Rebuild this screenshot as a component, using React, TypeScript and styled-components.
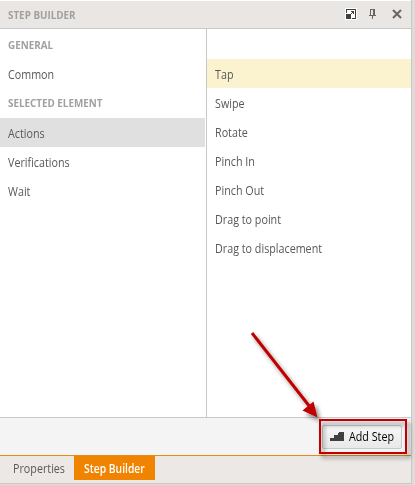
import React from "react";
import styled, { createGlobalStyle } from "styled-components";

const GlobalStyle = createGlobalStyle`
  * { box-sizing: border-box; }
  body {
    margin: 0;
    background: #dddcd8;
    font-family: "Open Sans", "Noto Sans", sans-serif;
    font-size: 12px;
    line-height: 17px;
    color: #58585a;
  }
`;

const Panel = styled.div`
  position: relative;
  display: flex;
  flex-direction: column;
  width: 412px;
  height: 484px;
  border-right: 1px solid #c8c8c8;
  border-bottom: 1px solid #c8c8c8;
  background: #fff;
`;

const Header = styled.header`
  display: flex;
  align-items: center;
  justify-content: space-between;
  height: 28px;
  margin-top: 1px;
  padding: 0 8px;
  background: #e9e6e3;
  border-bottom: 1px solid #c8c8c8;
`;

const Label = styled.span<{ $condense?: number }>`
  display: block;
  transform: scaleX(${(p) => p.$condense ?? 0.895});
  transform-origin: left center;
  white-space: nowrap;
`;

const Caption = styled(Label)`
  font-size: 11px;
  font-weight: 700;
  line-height: 15px;
  color: #a0a0a0;
`;

const HeaderIcons = styled.div`
  display: flex;
  align-items: center;
  padding-bottom: 1px;
`;

const Columns = styled.main`
  display: flex;
  height: 388px;
`;

const Categories = styled.section`
  display: flex;
  flex-direction: column;
  width: 207px;
  padding: 2px 1px 0 0;
  border-right: 1px solid #c8c8c8;
`;

const Steps = styled.section`
  flex: 1;
  padding-top: 30px;
`;

const Row = styled.div<{ $fill?: string }>`
  display: flex;
  align-items: center;
  height: 29px;
  padding: 2px 8px 0;
  background: ${(p) => p.$fill ?? "transparent"};
  font-weight: 500;
`;

const GroupRow = styled.div<{ $height: number }>`
  display: flex;
  align-items: center;
  height: ${(p) => p.$height}px;
  padding: 0 8px 1px;
`;

const Footer = styled.footer`
  display: flex;
  align-items: center;
  justify-content: flex-end;
  height: 38px;
  padding-right: 9px;
  background: #f4f4f4;
  border-top: 1px solid #c8c8c8;
`;

const AddButton = styled.button`
  display: flex;
  align-items: center;
  gap: 5px;
  width: 80px;
  height: 24px;
  padding: 0 0 0 7px;
  border: 1px solid #c9c9c9;
  border-radius: 2px;
  background: linear-gradient(#f6f6f6, #e9e9e9);
  font: inherit;
  font-weight: 500;
  color: #000;
`;

const Tabs = styled.nav`
  display: flex;
  height: 28px;
  border-top: 1px solid #e88b13;
  background: #ece8e5;
`;

const Tab = styled.div<{ $active?: boolean }>`
  display: flex;
  align-items: center;
  width: ${(p) => (p.$active ? 81 : 74)}px;
  height: 24px;
  padding-left: ${(p) => (p.$active ? 10 : 13)}px;
  background: ${(p) => (p.$active ? "#f08400" : "transparent")};
  color: ${(p) => (p.$active ? "#fff" : "#58585a")};
  font-weight: ${(p) => (p.$active ? 600 : 500)};
`;

const Annotation = styled.svg`
  position: absolute;
  left: 240px;
  top: 320px;
  overflow: visible;
  pointer-events: none;
`;

const FloatIcon = () => (
  <svg width="12" height="12" viewBox="0 0 12 12" shapeRendering="crispEdges">
    <rect width="12" height="12" fill="#fff" />
    <path d="M1 1H11V11H7V10H10V2H2V5H1Z" fill="#404040" />
    <path d="M1 6H6V11H1Z" fill="#404040" />
    <path d="M6 3H9V6H8V5H7V6H6V5H7V4H6Z" fill="#404040" />
  </svg>
);

const PinIcon = () => (
  <svg width="7" height="10" viewBox="0 0 7 10" shapeRendering="crispEdges">
    <path d="M1 0H6V6H7V7H4V10H3V7H0V6H1ZM2 1V6H4V1Z" fill="#666" fillRule="evenodd" />
  </svg>
);

const CloseIcon = () => (
  <svg width="10" height="10" viewBox="0 0 10 10">
    <path d="M1 1L9 9M9 1L1 9" stroke="#666" strokeWidth="2" />
  </svg>
);

const StairsIcon = () => (
  <svg width="14" height="9" viewBox="0 0 14 9" shapeRendering="crispEdges">
    <path d="M0 9V6H4V3H8V1H9V0H14V9Z" fill="#404040" />
  </svg>
);

const IconSlot = styled.span<{ $gap: number }>`
  display: flex;
  margin-right: ${(p) => p.$gap}px;
`;

const categories = [
  { label: "Actions", fill: "#e0e0e0" },
  { label: "Verifications" },
  { label: "Wait" },
];

const steps = [
  { label: "Tap", fill: "#fbf2cf" },
  { label: "Swipe" },
  { label: "Rotate" },
  { label: "Pinch In" },
  { label: "Pinch Out" },
  { label: "Drag to point" },
  { label: "Drag to displacement" },
];

export default function App() {
  return (
    <>
      <GlobalStyle />
      <Panel>
        <Header>
          <Caption>STEP BUILDER</Caption>
          <HeaderIcons>
            <IconSlot $gap={12}><FloatIcon /></IconSlot>
            <IconSlot $gap={16}><PinIcon /></IconSlot>
            <IconSlot $gap={1}><CloseIcon /></IconSlot>
          </HeaderIcons>
        </Header>
        <Columns>
          <Categories>
            <GroupRow $height={28}><Caption>GENERAL</Caption></GroupRow>
            <Row><Label>Common</Label></Row>
            <GroupRow $height={30}><Caption>SELECTED ELEMENT</Caption></GroupRow>
            {categories.map((c) => (
              <Row key={c.label} $fill={c.fill}><Label>{c.label}</Label></Row>
            ))}
          </Categories>
          <Steps>
            {steps.map((s) => (
              <Row key={s.label} $fill={s.fill}><Label>{s.label}</Label></Row>
            ))}
          </Steps>
        </Columns>
        <Footer>
          <AddButton><StairsIcon /><Label>Add Step</Label></AddButton>
        </Footer>
        <Tabs>
          <Tab><Label>Properties</Label></Tab>
          <Tab $active><Label $condense={0.86}>Step Builder</Label></Tab>
        </Tabs>
        <Annotation width="172" height="140" viewBox="240 320 172 140">
          <defs>
            <filter id="shadow" x="-20%" y="-20%" width="150%" height="150%">
              <feDropShadow dx="3" dy="4" stdDeviation="2" floodColor="#000" floodOpacity="0.45" />
            </filter>
          </defs>
          <g filter="url(#shadow)">
            <path d="M252 333L310 407" stroke="#c00000" strokeWidth="3" />
            <path d="M317.5 417.5L302.5 410.5L313.5 401.5Z" fill="#c00000" />
            <rect x="320" y="420" width="86" height="33" fill="none" stroke="#c00000" strokeWidth="2" />
          </g>
        </Annotation>
      </Panel>
    </>
  );
}
